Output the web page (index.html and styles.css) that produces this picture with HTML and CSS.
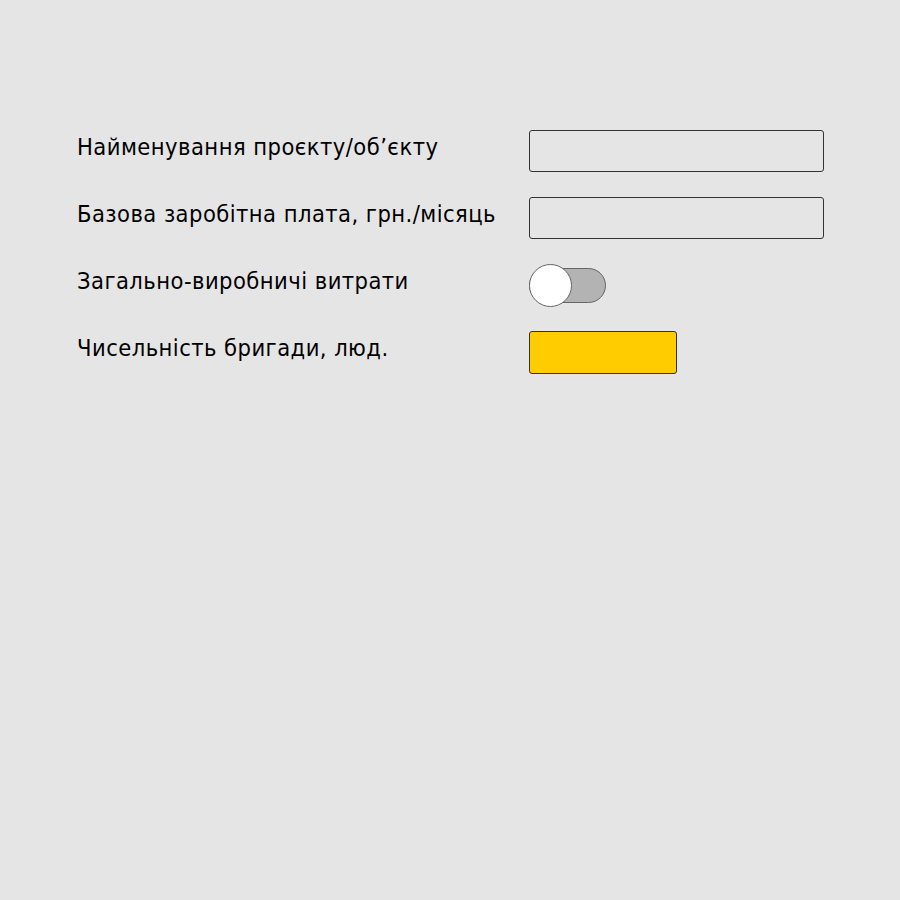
FILE: index.html
```html
<!DOCTYPE html>
<html lang="uk">
<head>
<meta charset="utf-8">
<link rel="stylesheet" href="styles.css">
</head>
<body>
<div class="form">
  <div class="label">Найменування проєкту/об’єкту</div>
  <div class="field"><div class="input"></div></div>
  <div class="label">Базова заробітна плата, грн./місяць</div>
  <div class="field"><div class="input"></div></div>
  <div class="label">Загально-виробничі витрати</div>
  <div class="field"><div class="toggle"><div class="knob"></div></div></div>
  <div class="label">Чисельність бригади, люд.</div>
  <div class="field"><div class="yellow"></div></div>
</div>
</body>
</html>
```
FILE: styles.css
```css
html, body {
  margin: 0;
  padding: 0;
  background: #e5e5e5;
  width: 900px;
  height: 900px;
}
.form {
  display: grid;
  grid-template-columns: 452px 295px;
  grid-auto-rows: 42px;
  row-gap: 25px;
  padding: 130px 0 0 77px;
}
.label {
  font-family: "DejaVu Sans Condensed", "DejaVu Sans", sans-serif;
  font-size: 23.5px;
  letter-spacing: 0.45px;
  color: #000;
  align-self: center;
  padding-bottom: 8px;
  white-space: nowrap;
}
.field {
  display: flex;
  align-items: center;
}
.input {
  box-sizing: border-box;
  width: 295px;
  height: 42px;
  border: 1px solid #333;
  border-radius: 3px;
  background: #e5e5e5;
}
.toggle {
  position: relative;
  box-sizing: border-box;
  width: 77px;
  height: 35px;
  margin-top: 1px;
  border: 1px solid #666;
  border-radius: 18px;
  background: #b3b3b3;
}
.knob {
  position: absolute;
  box-sizing: border-box;
  left: -1px;
  top: -5px;
  width: 43px;
  height: 43px;
  border: 1px solid #666;
  border-radius: 50%;
  background: #fff;
}
.yellow {
  box-sizing: border-box;
  width: 148px;
  height: 43px;
  border: 1px solid #333;
  border-radius: 3px;
  background: #ffcc00;
}
```
